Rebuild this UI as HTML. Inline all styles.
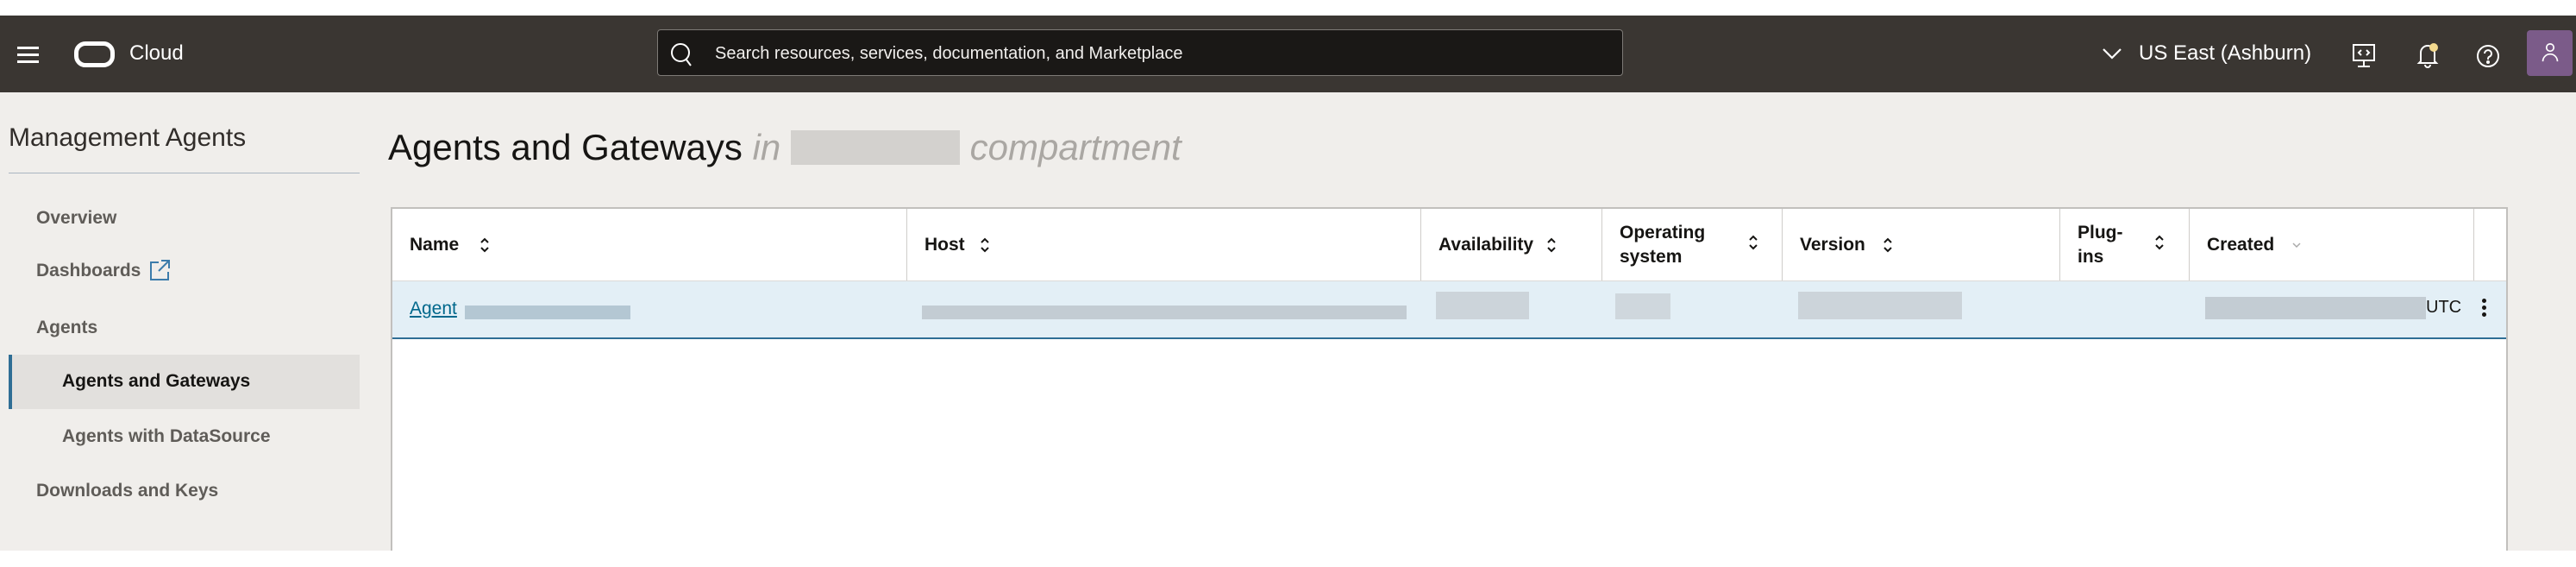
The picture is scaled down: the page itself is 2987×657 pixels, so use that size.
<!DOCTYPE html>
<html><head><meta charset="utf-8"><style>
*{margin:0;padding:0;box-sizing:border-box}
body{width:2987px;height:657px;background:#fff;position:relative;overflow:hidden;font-family:"Liberation Sans",sans-serif}
.a{position:absolute}
#hdr{left:0;top:18px;width:2987px;height:89px;background:#3a3632}
#main{left:0;top:107px;width:2987px;height:531px;background:#f0eeeb}
.nav{position:absolute;font-size:21px;font-weight:bold;color:#5f5c58}
.th{position:absolute;top:0;height:83px;border-right:1px solid #cfcdca;font-size:21px;font-weight:bold;color:#161513}
.th span{position:absolute;left:20px;top:50%;transform:translateY(-50%);line-height:28px}
.srt{position:absolute;top:31px;width:14px;height:22px}
.blur{position:absolute;background:#c3ccd3}
</style></head><body>
<div id="hdr" class="a">
 <div class="a" style="left:20px;top:36px;width:25px;height:3px;background:#fff;box-shadow:0 8px 0 #fff,0 16px 0 #fff"></div>
 <div class="a" style="left:86px;top:30px;width:47px;height:30px;border:5px solid #fff;border-radius:13px"></div>
 <div class="a" style="left:150px;top:30px;color:#fff;font-size:24px">Cloud</div>
 <div class="a" style="left:762px;top:16px;width:1120px;height:54px;background:#1a1816;border:1px solid #7d7a76;border-radius:4px">
  <svg class="a" style="left:14px;top:14px" width="26" height="28" viewBox="0 0 26 28"><circle cx="12" cy="12" r="10" fill="none" stroke="#fff" stroke-width="2"/><path d="M18 19l6 8" stroke="#fff" stroke-width="2"/></svg>
  <div class="a" style="left:66px;top:16px;color:#f1efed;font-size:20px">Search resources, services, documentation, and Marketplace</div>
 </div>
 <svg class="a" style="left:2437px;top:36px" width="24" height="16" viewBox="0 0 24 16"><path d="M2 3l10 10 10-10" fill="none" stroke="#fff" stroke-width="2.2"/></svg>
 <div class="a" style="left:2480px;top:30px;color:#fff;font-size:24px">US East (Ashburn)</div>
 <svg class="a" style="left:2726px;top:32px" width="30" height="30" viewBox="0 0 30 30" fill="none" stroke="#fff" stroke-width="2"><rect x="3" y="2" width="24" height="18"/><path d="M15 20v6M8 27h14M12 8l-3 3 3 3M18 8l3 3-3 3"/></svg>
 <svg class="a" style="left:2800px;top:30px" width="30" height="32" viewBox="0 0 30 32" fill="none" stroke="#fff" stroke-width="2"><path d="M7 23V13a8 8 0 0 1 16 0v10l2 2H5zM12 27a3 3 0 0 0 6 0"/><circle cx="22" cy="7" r="5" fill="#f3d98e" stroke="none"/></svg>
 <svg class="a" style="left:2870px;top:32px" width="30" height="30" viewBox="0 0 30 30" fill="none" stroke="#fff" stroke-width="2"><circle cx="15" cy="15" r="12"/><path d="M11 12a4 4 0 1 1 5 4c-1 .5-1 1.5-1 3"/><circle cx="15" cy="22" r="1" fill="#fff"/></svg>
 <div class="a" style="left:2930px;top:17px;width:53px;height:53px;background:#7b5b89;border-radius:4px">
  <svg class="a" style="left:16px;top:13px" width="22" height="26" viewBox="0 0 26 30" fill="none" stroke="#fff" stroke-width="2"><circle cx="13" cy="8" r="5"/><path d="M3 27a10 10 0 0 1 20 0"/></svg>
 </div>
</div>
<div id="main" class="a">
 <div class="a" style="left:10px;top:36px;font-size:30px;color:#312d2a">Management Agents</div>
 <div class="a" style="left:10px;top:93px;width:407px;height:1px;background:#a9b5c1"></div>
 <div class="nav" style="left:42px;top:134px">Overview</div>
 <div class="nav" style="left:42px;top:195px">Dashboards</div>
 <svg class="a" style="left:172px;top:193px" width="26" height="26" viewBox="0 0 26 26" fill="none" stroke="#3c7cab" stroke-width="2"><path d="M12 4H3v20h20v-9M15 2h9v9M24 2L12 14"/></svg>
 <div class="nav" style="left:42px;top:261px">Agents</div>
 <div class="a" style="left:10px;top:304px;width:407px;height:63px;background:#e2e0dd;border-left:4px solid #2f6e95"></div>
 <div class="nav" style="left:72px;top:323px;color:#161513">Agents and Gateways</div>
 <div class="nav" style="left:72px;top:387px">Agents with DataSource</div>
 <div class="nav" style="left:42px;top:450px">Downloads and Keys</div>

 <div class="a" style="left:450px;top:40px;font-size:42px;color:#161513;white-space:nowrap">Agents and Gateways <i style="color:#aaa7a3">in</i> <span style="display:inline-block;width:196px;height:40px;background:#d3d1ce;vertical-align:-6px"></span> <i style="color:#aaa7a3">compartment</i></div>

 <div class="a" style="left:453px;top:133px;width:2455px;height:398px;background:#fff;border:2px solid #c2c0bd;border-bottom:none">
  <div class="th" style="left:0;width:597px"><span>Name</span></div>
  <div class="th" style="left:597px;width:596px"><span>Host</span></div>
  <div class="th" style="left:1193px;width:210px"><span>Availability</span></div>
  <div class="th" style="left:1403px;width:209px"><span>Operating<br>system</span></div>
  <div class="th" style="left:1612px;width:322px"><span>Version</span></div>
  <div class="th" style="left:1934px;width:150px"><span>Plug-<br>ins</span></div>
  <div class="th" style="left:2084px;width:330px"><span>Created</span></div>
  <svg class="srt" style="left:100px" viewBox="0 0 14 22" fill="none" stroke="#161513" stroke-width="2"><path d="M3 8l4-4 4 4M3 14l4 4 4-4"/></svg>
  <svg class="srt" style="left:680px" viewBox="0 0 14 22" fill="none" stroke="#161513" stroke-width="2"><path d="M3 8l4-4 4 4M3 14l4 4 4-4"/></svg>
  <svg class="srt" style="left:1337px" viewBox="0 0 14 22" fill="none" stroke="#161513" stroke-width="2"><path d="M3 8l4-4 4 4M3 14l4 4 4-4"/></svg>
  <svg class="srt" style="left:1571px;top:28px" viewBox="0 0 14 22" fill="none" stroke="#161513" stroke-width="2"><path d="M3 8l4-4 4 4M3 14l4 4 4-4"/></svg>
  <svg class="srt" style="left:1727px" viewBox="0 0 14 22" fill="none" stroke="#161513" stroke-width="2"><path d="M3 8l4-4 4 4M3 14l4 4 4-4"/></svg>
  <svg class="srt" style="left:2042px;top:28px" viewBox="0 0 14 22" fill="none" stroke="#161513" stroke-width="2"><path d="M3 8l4-4 4 4M3 14l4 4 4-4"/></svg>
  <svg class="srt" style="left:2201px" viewBox="0 0 14 22" fill="none" stroke="#aaa" stroke-width="1.5"><path d="M3 9l4 4 4-4"/></svg>
  <div class="a" style="left:0;top:83px;width:2451px;height:68px;background:#e3eff6;border-top:1px solid #dcdad7;border-bottom:2px solid #2f6e95">
   <div class="a" style="left:20px;top:20px;font-size:21px;color:#00688c;text-decoration:underline">Agent</div>
   <div class="blur" style="left:84px;top:28px;width:192px;height:16px;background:#b4c7d3"></div>
   <div class="blur" style="left:614px;top:28px;width:562px;height:16px"></div>
   <div class="blur" style="left:1210px;top:12px;width:108px;height:32px;background:#ccd4da"></div>
   <div class="blur" style="left:1418px;top:14px;width:64px;height:30px;background:#cfd7dd"></div>
   <div class="blur" style="left:1630px;top:12px;width:190px;height:32px;background:#ccd4da"></div>
   <div class="blur" style="left:2102px;top:18px;width:256px;height:26px"></div>
   <div class="a" style="left:2358px;top:19px;font-size:20px;color:#161513">UTC</div>
   <div class="a" style="left:2423px;top:20px;width:5px;height:5px;border-radius:50%;background:#161513;box-shadow:0 8px 0 #161513,0 16px 0 #161513"></div>
  </div>
 </div>
</div>
</body></html>
